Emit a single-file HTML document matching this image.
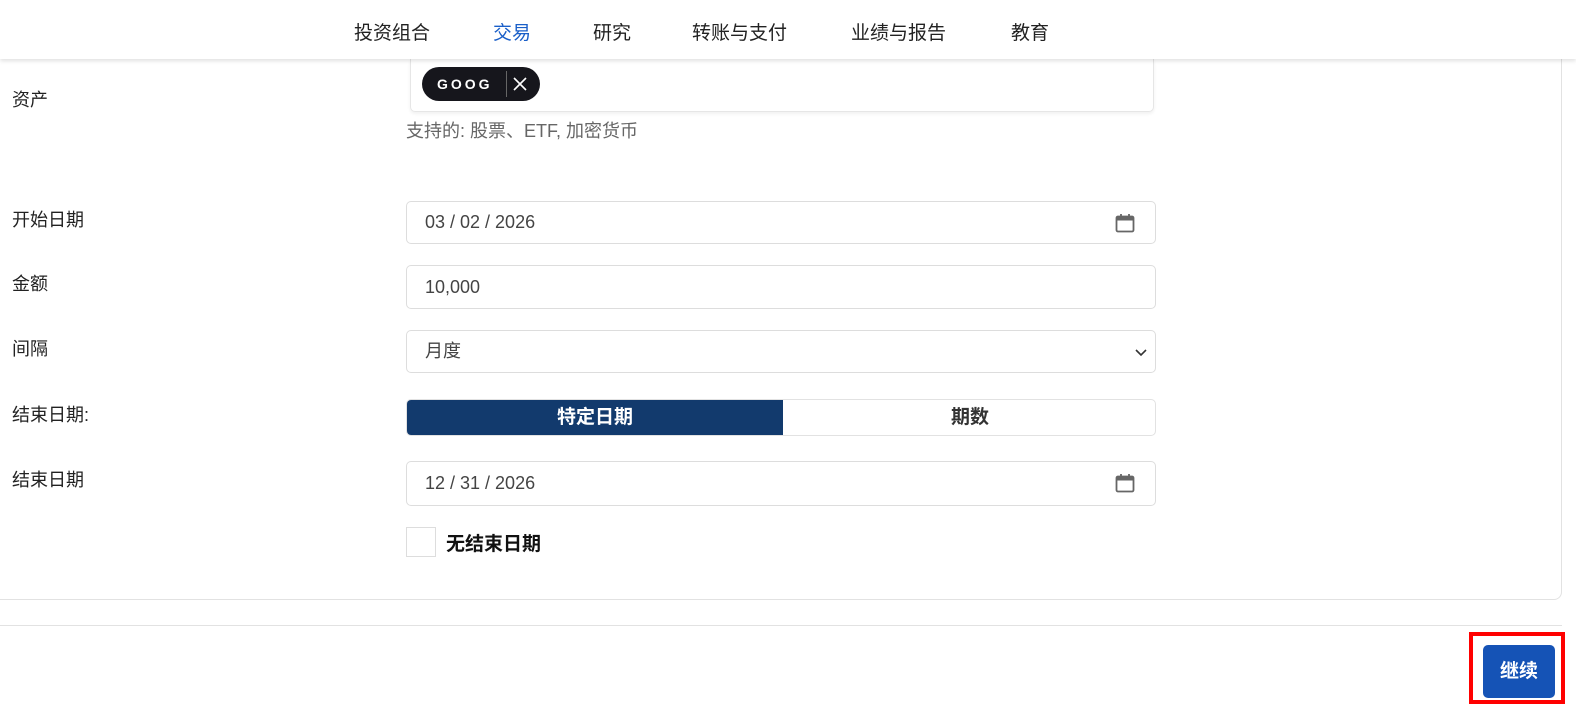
<!DOCTYPE html><html><head><meta charset="utf-8"><style>
*{box-sizing:border-box;margin:0;padding:0}
body{width:1576px;height:704px;overflow:hidden;background:#fff;font-family:"Liberation Sans","Noto Sans CJK SC",sans-serif;color:#222;position:relative}
.hdr{position:absolute;left:0;top:0;width:1576px;height:59px;background:#fff;box-shadow:0 2px 4px rgba(0,0,0,.12);z-index:5}
.hdr span{position:absolute;top:18px;font-size:19px;color:#222}
.lbl{position:absolute;left:12px;font-size:18px;color:#222}
.inp{position:absolute;left:406px;width:750px;border:1px solid #ddd;border-radius:5px;background:#fff;font-size:18px;color:#444;padding-left:18px}
.cal{position:absolute;right:20px;top:11px}
.panel{position:absolute;left:-10px;top:0;width:1572px;height:600px;border:1px solid #e2e2e2;border-radius:8px}
</style></head><body>
<div class="panel"></div>
<div class="hdr">
<span style="left:354px">投资组合</span>
<span style="left:493px;color:#1a5fc8">交易</span>
<span style="left:593px">研究</span>
<span style="left:692px">转账与支付</span>
<span style="left:851px">业绩与报告</span>
<span style="left:1011px">教育</span>
</div>
<div style="position:absolute;left:410px;top:59px;width:744px;height:53px;border:1px solid #e6e6e6;border-top:none;border-radius:0 0 5px 5px;box-shadow:0 2px 3px rgba(0,0,0,.06)"></div>
<div style="position:absolute;left:422px;top:67px;width:118px;height:34px;background:#16161c;border-radius:17px;color:#fff">
<span style="position:absolute;left:15px;top:9px;font-size:14px;font-weight:bold;letter-spacing:3px">GOOG</span>
<span style="position:absolute;left:84px;top:4px;width:1px;height:26px;background:#666"></span>
<svg style="position:absolute;left:91px;top:10px" width="14" height="14" viewBox="0 0 14 14"><path d="M1 1L13 13M13 1L1 13" stroke="#fff" stroke-width="1.6"/></svg>
</div>
<div class="lbl" style="top:86px">资产</div>
<div style="position:absolute;left:406px;top:117px;font-size:18px;color:#666">支持的: 股票、ETF, 加密货币</div>
<div class="lbl" style="top:206px">开始日期</div>
<div class="inp" style="top:201px;height:43px;line-height:41px">03 / 02 / 2026<svg class="cal" width="20" height="20" viewBox="0 0 20 20"><rect x="1.5" y="3.5" width="17" height="15" rx="1.5" fill="none" stroke="#666" stroke-width="1.8"/><rect x="1.5" y="3.5" width="17" height="4" fill="#666"/><path d="M6 1v4M14 1v4" stroke="#666" stroke-width="1.8"/></svg></div>
<div class="lbl" style="top:270px">金额</div>
<div class="inp" style="top:265px;height:44px;line-height:42px">10,000</div>
<div class="lbl" style="top:335px">间隔</div>
<div class="inp" style="top:330px;height:43px;line-height:41px">月度<svg style="position:absolute;right:8px;top:16px" width="12" height="10" viewBox="0 0 12 10"><path d="M1 3l5 5 5-5" fill="none" stroke="#333" stroke-width="1.6"/></svg></div>
<div class="lbl" style="top:401px">结束日期:</div>
<div style="position:absolute;left:406px;top:399px;width:750px;height:37px;border:1px solid #e2e2e2;border-radius:5px;overflow:hidden">
<div style="position:absolute;left:0;top:0;width:376px;height:37px;background:#123a6d;color:#fff;font-weight:bold;font-size:19px;text-align:center;line-height:35px">特定日期</div>
<div style="position:absolute;left:376px;top:0;width:374px;height:37px;color:#333;font-weight:bold;font-size:19px;text-align:center;line-height:35px">期数</div>
</div>
<div class="lbl" style="top:466px">结束日期</div>
<div class="inp" style="top:461px;height:45px;line-height:43px">12 / 31 / 2026<svg class="cal" width="20" height="20" viewBox="0 0 20 20"><rect x="1.5" y="3.5" width="17" height="15" rx="1.5" fill="none" stroke="#666" stroke-width="1.8"/><rect x="1.5" y="3.5" width="17" height="4" fill="#666"/><path d="M6 1v4M14 1v4" stroke="#666" stroke-width="1.8"/></svg></div>
<div style="position:absolute;left:406px;top:527px;width:30px;height:30px;border:1px solid #ddd"></div>
<div style="position:absolute;left:446px;top:529px;font-size:19px;font-weight:bold;color:#111">无结束日期</div>
<div style="position:absolute;left:0;top:625px;width:1562px;height:1px;background:#e2e2e2"></div>
<div style="position:absolute;left:1469px;top:632px;width:96px;height:72px;border:4px solid #f00"></div>
<div style="position:absolute;left:1483px;top:645px;width:72px;height:53px;background:#1553b6;border-radius:5px;color:#fff;font-weight:bold;font-size:19px;text-align:center;line-height:53px">继续</div>
</body></html>
